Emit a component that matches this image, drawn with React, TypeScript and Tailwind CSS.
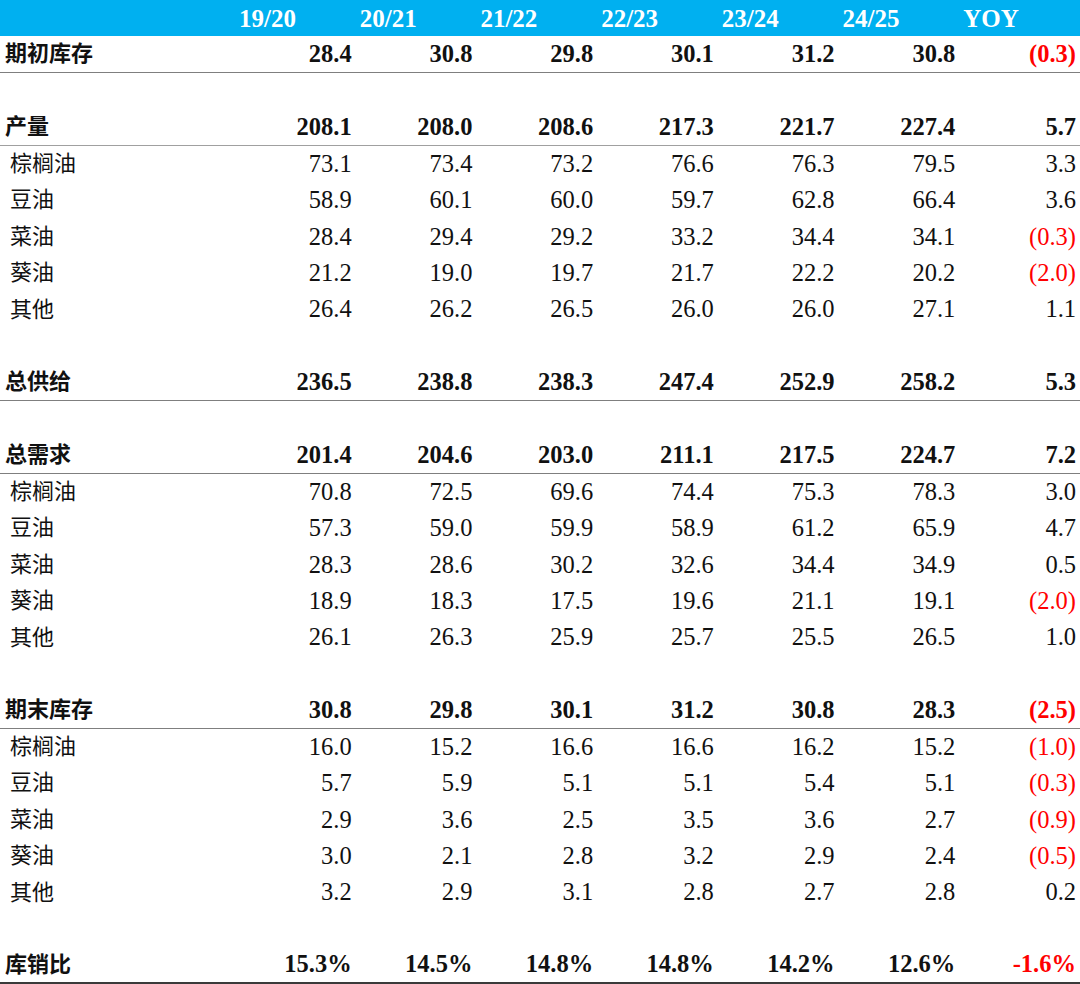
import React from "react";

type Row =
  | { kind: "blank" }
  | { kind: "data"; label: string; bold: boolean; vals: string[]; yoy: string; line?: "light" | "mid" | "dark" };

const rows: Row[] = [
  { kind: "data", label: "期初库存", bold: true, vals: ["28.4", "30.8", "29.8", "30.1", "31.2", "30.8"], yoy: "(0.3)", line: "mid" },
  { kind: "blank" },
  { kind: "data", label: "产量", bold: true, vals: ["208.1", "208.0", "208.6", "217.3", "221.7", "227.4"], yoy: "5.7", line: "light" },
  { kind: "data", label: "棕榈油", bold: false, vals: ["73.1", "73.4", "73.2", "76.6", "76.3", "79.5"], yoy: "3.3" },
  { kind: "data", label: "豆油", bold: false, vals: ["58.9", "60.1", "60.0", "59.7", "62.8", "66.4"], yoy: "3.6" },
  { kind: "data", label: "菜油", bold: false, vals: ["28.4", "29.4", "29.2", "33.2", "34.4", "34.1"], yoy: "(0.3)" },
  { kind: "data", label: "葵油", bold: false, vals: ["21.2", "19.0", "19.7", "21.7", "22.2", "20.2"], yoy: "(2.0)" },
  { kind: "data", label: "其他", bold: false, vals: ["26.4", "26.2", "26.5", "26.0", "26.0", "27.1"], yoy: "1.1" },
  { kind: "blank" },
  { kind: "data", label: "总供给", bold: true, vals: ["236.5", "238.8", "238.3", "247.4", "252.9", "258.2"], yoy: "5.3", line: "mid" },
  { kind: "blank" },
  { kind: "data", label: "总需求", bold: true, vals: ["201.4", "204.6", "203.0", "211.1", "217.5", "224.7"], yoy: "7.2", line: "mid" },
  { kind: "data", label: "棕榈油", bold: false, vals: ["70.8", "72.5", "69.6", "74.4", "75.3", "78.3"], yoy: "3.0" },
  { kind: "data", label: "豆油", bold: false, vals: ["57.3", "59.0", "59.9", "58.9", "61.2", "65.9"], yoy: "4.7" },
  { kind: "data", label: "菜油", bold: false, vals: ["28.3", "28.6", "30.2", "32.6", "34.4", "34.9"], yoy: "0.5" },
  { kind: "data", label: "葵油", bold: false, vals: ["18.9", "18.3", "17.5", "19.6", "21.1", "19.1"], yoy: "(2.0)" },
  { kind: "data", label: "其他", bold: false, vals: ["26.1", "26.3", "25.9", "25.7", "25.5", "26.5"], yoy: "1.0" },
  { kind: "blank" },
  { kind: "data", label: "期末库存", bold: true, vals: ["30.8", "29.8", "30.1", "31.2", "30.8", "28.3"], yoy: "(2.5)", line: "mid" },
  { kind: "data", label: "棕榈油", bold: false, vals: ["16.0", "15.2", "16.6", "16.6", "16.2", "15.2"], yoy: "(1.0)" },
  { kind: "data", label: "豆油", bold: false, vals: ["5.7", "5.9", "5.1", "5.1", "5.4", "5.1"], yoy: "(0.3)" },
  { kind: "data", label: "菜油", bold: false, vals: ["2.9", "3.6", "2.5", "3.5", "3.6", "2.7"], yoy: "(0.9)" },
  { kind: "data", label: "葵油", bold: false, vals: ["3.0", "2.1", "2.8", "3.2", "2.9", "2.4"], yoy: "(0.5)" },
  { kind: "data", label: "其他", bold: false, vals: ["3.2", "2.9", "3.1", "2.8", "2.7", "2.8"], yoy: "0.2" },
  { kind: "blank" },
  { kind: "data", label: "库销比", bold: true, vals: ["15.3%", "14.5%", "14.8%", "14.8%", "14.2%", "12.6%"], yoy: "-1.6%", line: "dark" },
];

const headers = ["19/20", "20/21", "21/22", "22/23", "23/24", "24/25", "YOY"];

const font = { fontFamily: '"Liberation Serif", "Noto Sans CJK SC", serif' };

export default function App() {
  return (
    <div className="w-[1080px] h-[984px] bg-white text-black overflow-hidden" style={font}>
      <div className="grid grid-cols-[235px_repeat(7,1fr)] h-[36.45px] bg-[#00b0f0] text-white font-bold text-[25px] items-center">
        <div />
        {headers.map((h) => (
          <div key={h} className="pl-[4px] leading-none">{h}</div>
        ))}
      </div>
      {rows.map((r, i) => {
        if (r.kind === "blank") return <div key={i} className="h-[36.45px]" />;
        const border =
          r.line === "dark"
            ? "border-b-2 border-[#3a3a3a]"
            : r.line === "mid"
            ? "border-b-[1.5px] border-[#7f7f7f]"
            : r.line === "light"
            ? "border-b-[1.5px] border-[#a0a0a0]"
            : "";
        const neg = r.yoy.startsWith("(") || r.yoy.startsWith("-");
        return (
          <div
            key={i}
            className={`grid grid-cols-[235px_repeat(7,1fr)] h-[36.45px] items-center text-[24.5px] leading-none ${border} ${r.bold ? "font-bold" : "font-normal"}`}
          >
            <div className={`${r.bold ? "pl-[5px]" : "pl-[10px]"} text-[22px] text-[#111]`}>{r.label}</div>
            {r.vals.map((v, j) => (
              <div key={j} className="text-right pr-[4px] text-[#111]">{v}</div>
            ))}
            <div className={`text-right pr-[4px] ${neg ? "text-[#ff0000]" : "text-[#111]"}`}>{r.yoy}</div>
          </div>
        );
      })}
    </div>
  );
}
